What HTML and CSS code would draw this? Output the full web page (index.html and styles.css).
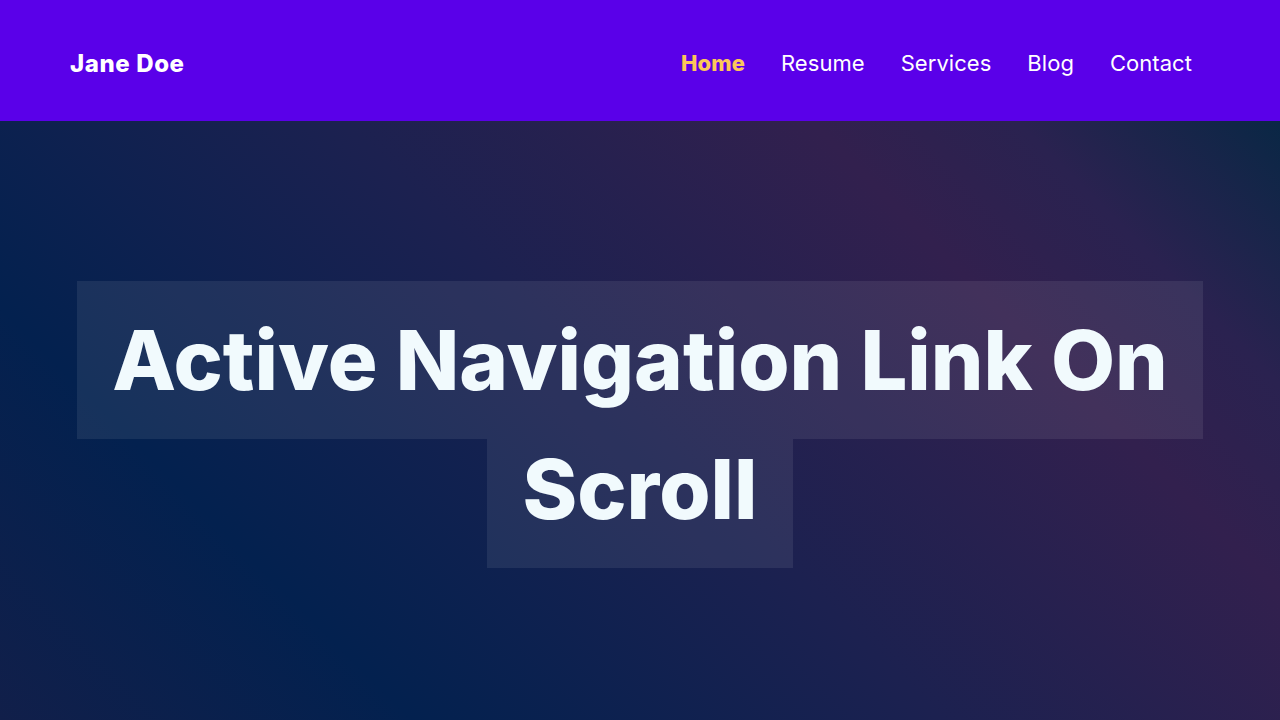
FILE: index.html
```html
<!DOCTYPE html>
<html lang="en">
<head>
<meta charset="utf-8">
<title>Active Navigation Link On Scroll</title>
<link rel="stylesheet" href="styles.css">
</head>
<body>
<header class="site-header">
  <a class="logo" href="#">Jane Doe</a>
  <nav class="nav">
    <a class="nav-link active" href="#home">Home</a>
    <a class="nav-link" href="#resume">Resume</a>
    <a class="nav-link" href="#services">Services</a>
    <a class="nav-link" href="#blog">Blog</a>
    <a class="nav-link" href="#contact">Contact</a>
  </nav>
</header>
<main class="hero" id="home">
  <h1 class="title">
    <span class="title-line title-line-first">Active Navigation Link On</span>
    <span class="title-line">Scroll</span>
  </h1>
</main>
</body>
</html>
```
FILE: styles.css
```css
* { box-sizing: border-box; }
html, body { margin: 0; padding: 0; }
body {
  font-family: "Inter", "Noto Sans", sans-serif;
  background: #0c2148;
  height: 720px;
  overflow: hidden;
}
.site-header {
  height: 121px;
  background: #5a00e9;
  display: flex;
  align-items: center;
  justify-content: space-between;
  padding: 5px 88px 0 70px;
}
.logo {
  color: #ffffff;
  text-decoration: none;
  font-weight: 800;
  font-size: 24px;
  letter-spacing: 0.6px;
}
.nav {
  display: flex;
  gap: 36px;
}
.nav-link {
  color: #ffffff;
  text-decoration: none;
  font-size: 22px;
  font-weight: 400;
  letter-spacing: 0.05px;
}
.nav-link.active {
  color: #fcc65a;
  font-weight: 800;
}
.hero {
  height: 599px;
  display: flex;
  align-items: center;
  justify-content: center;
  padding-top: 8px;
  background: linear-gradient(45deg, #111f4a 0%, #03214f 22%, #1c2150 50%, #32204e 75%, #2a2250 86%, #0a2745 100%);
}
.title {
  margin: 0;
  display: flex;
  flex-direction: column;
  align-items: center;
  color: #f1fafd;
  font-size: 83px;
  font-weight: 800;
  letter-spacing: 0;
}
.title-line {
  display: block;
  line-height: 100px;
  padding: 0 35px 29px;
  background: rgba(255, 255, 255, 0.08);
}
.title-line-first {
  padding-top: 29px;
}
```
